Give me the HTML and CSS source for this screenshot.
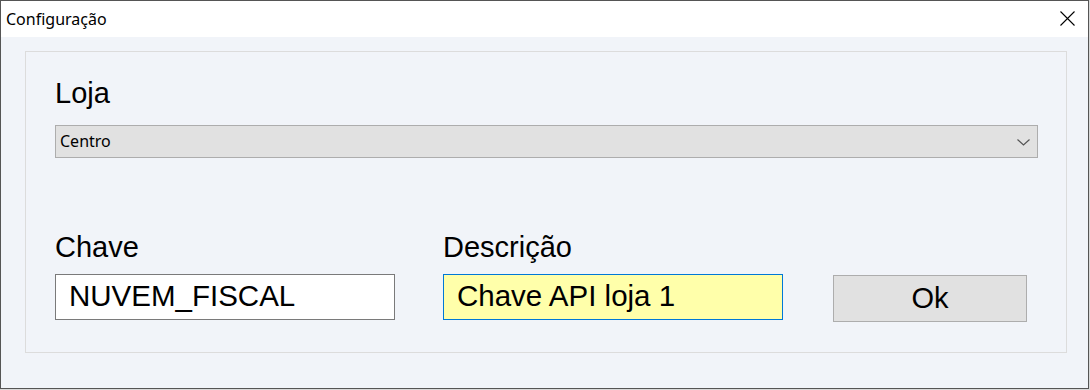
FILE: index.html
```html
<!doctype html>
<html>
<head>
	<meta charset="UTF-8" />
	<title>Configuração</title>
	<link rel="stylesheet" href="styles.css">
</head>
<body>

	<div class="window">
		<div class="titleBar">
			<span class="titleText">Configuração</span>
			<span class="closeBtn">
				<svg width="15" height="15" viewBox="0 0 15 15">
					<path d="M0.5 0.5 L14.5 14.5 M14.5 0.5 L0.5 14.5" stroke="#000" stroke-width="1.1" fill="none" />
				</svg>
			</span>
		</div>

		<div class="client">
			<div class="groupBox">
				<p class="bigLabel lojaLabel">Loja</p>
				<div class="combo">
					<span class="comboText">Centro</span>
					<svg class="chevron" width="13" height="7" viewBox="0 0 13 7">
						<path d="M0.5 0.5 L6.5 6 L12.5 0.5" stroke="#555" stroke-width="1.2" fill="none" />
					</svg>
				</div>

				<div class="fieldRow">
					<div class="field">
						<p class="bigLabel">Chave</p>
						<div class="textBox">NUVEM_FISCAL</div>
					</div>
					<div class="field">
						<p class="bigLabel">Descrição</p>
						<div class="textBox textBoxFocus">Chave API loja 1</div>
					</div>
					<div class="okBtn">Ok</div>
				</div>
			</div>
		</div>
	</div>

</body>
</html>
```

FILE: styles.css
```css
body {
	margin: 0;
	background: #d8d8d8;
	font-family: "Liberation Sans", Arial, sans-serif;
}
.window {
	width: 1087px;
	height: 387px;
	border: 1px solid #555;
	background: #fff;
	display: flex;
	flex-direction: column;
}
.titleBar {
	height: 36px;
	display: flex;
	align-items: center;
	justify-content: space-between;
	padding: 0 13px 0 5px;
	background: #fff;
}
.titleText {
	font-family: "Noto Sans", sans-serif;
	font-size: 16px;
	line-height: 36px;
	color: #000;
}
.closeBtn {
	display: flex;
	margin-bottom: 2px;
}
.client {
	flex: 1;
	background: #f1f4f9;
	padding: 14px 21px 35px 24px;
	display: flex;
}
.groupBox {
	flex: 1;
	border: 1px solid #dcdcdc;
	padding: 0 28px 0 29px;
}
.bigLabel {
	margin: 0;
	font-size: 29px;
	line-height: 33px;
	color: #000;
}
.lojaLabel {
	margin-top: 25px;
}
.combo {
	margin-top: 15px;
	height: 31px;
	border: 1px solid #adadad;
	background: #e1e1e1;
	display: flex;
	align-items: center;
	justify-content: space-between;
	padding: 0 7px 0 4px;
}
.comboText {
	font-family: "Noto Sans", sans-serif;
	font-size: 16px;
	line-height: 31px;
	color: #000;
}
.chevron {
	margin-top: 1px;
}
.fieldRow {
	margin-top: 73px;
	display: flex;
	align-items: flex-start;
	gap: 48px;
}
.field {
	width: 340px;
}
.textBox {
	margin-top: 10px;
	height: 41px;
	border: 1px solid #7a7a7a;
	background: #fff;
	padding: 0 13px 3px 13px;
	font-size: 29.5px;
	line-height: 41px;
	white-space: nowrap;
}
.textBoxFocus {
	border-color: #0078d7;
	background: #ffffaa;
}
.okBtn {
	margin-top: 44px;
	margin-left: 2px;
	width: 192px;
	height: 45px;
	border: 1px solid #adadad;
	background: #e1e1e1;
	text-align: center;
	font-size: 29px;
	line-height: 45px;
}
```
